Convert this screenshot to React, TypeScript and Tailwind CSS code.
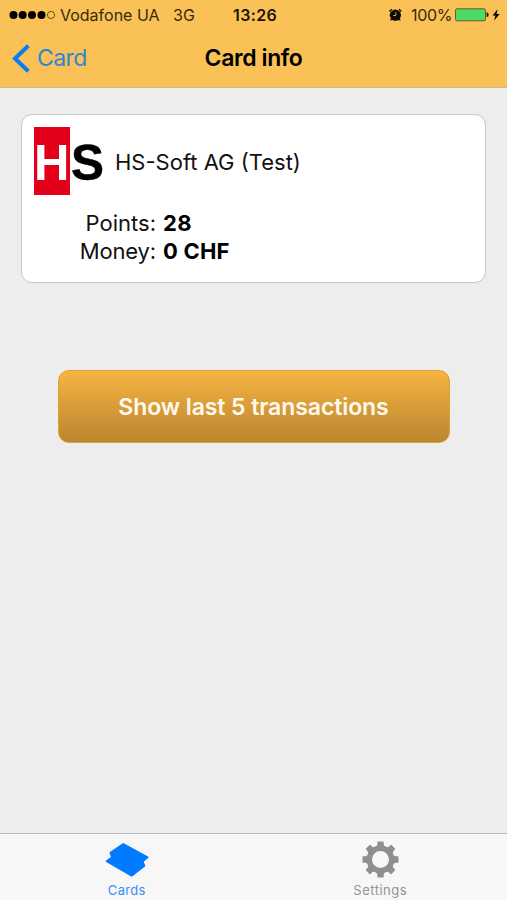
const StatusBar = () => {
  return (
    <div className="flex h-[30px] items-center text-[16px] leading-[30px] text-[#3a2a0c]">
      <svg className="ml-[9px] shrink-0" width="47" height="10" viewBox="0 0 47 10">
        <circle cx="4.5" cy="5" r="4" fill="#000" />
        <circle cx="13.7" cy="5" r="4" fill="#000" />
        <circle cx="23" cy="5" r="4" fill="#000" />
        <circle cx="32.5" cy="5" r="4" fill="#000" />
        <circle cx="42" cy="5" r="3.6" fill="none" stroke="#4a3610" strokeWidth="0.8" />
      </svg>
      <span className="ml-[4px] w-[113px] whitespace-nowrap">Vodafone UA</span>
      <span className="w-[60px]">3G</span>
      <span className="w-[155px] font-semibold tracking-[0.4px] text-[#1c1404]">13:26</span>
      <svg className="shrink-0" width="14" height="14" viewBox="0 0 14 14">
        <circle cx="7.4" cy="7.2" r="5.6" fill="#0d0a02" />
        <path d="M1.4 3.4 L3.8 1.2 M13.4 3.4 L11 1.2 M3.6 11 L2.6 12.4 M11.2 11 L12.2 12.4" stroke="#0d0a02" strokeWidth="1.3" />
        <path d="M7.8 4.4 V7.6 H5.2" fill="none" stroke="#f9c156" strokeWidth="0.9" />
      </svg>
      <span className="ml-[9px] w-[44px] whitespace-nowrap tracking-[-0.3px]">100%</span>
      <svg className="shrink-0" width="46" height="14" viewBox="0 0 46 14">
        <rect x="0.5" y="0.8" width="30" height="12" rx="1.6" fill="#4cd964" stroke="#6a5c20" />
        <path d="M31.5 4.5 h0.6 q1.4 0 1.4 1.4 v1.7 q0 1.4 -1.4 1.4 h-0.6z" fill="#2a1f06" />
        <path d="M42.6 1.2 L37.6 7.6 H40.4 L39.2 12.4 L44.6 6 H41.6z" fill="#000" />
      </svg>
    </div>
  );
};

const NavBar = () => {
  return (
    <div className="grid h-[57px] grid-cols-[160px_1fr_160px] items-center">
      <a href="#" className="flex h-[57px] items-center text-[23px] text-[#2e86d8]">
        <svg className="ml-[12px] shrink-0" width="19" height="29" viewBox="0 0 19 29">
          <path d="M16.3 1.7 L3 14.5 L16.3 27.3" fill="none" stroke="#067df7" strokeWidth="4" />
        </svg>
        <span className="ml-[6px] tracking-[-0.6px]">Card</span>
      </a>
      <h1 className="text-center text-[23px] font-semibold tracking-[-0.4px] text-black">Card info</h1>
    </div>
  );
};

const Logo = () => {
  return (
    <svg className="shrink-0" width="70" height="68" viewBox="0 0 70 68" fontFamily="'Liberation Sans', Arial, sans-serif" fontWeight="700" fontSize="50">
      <rect width="36" height="68" fill="#e2001a" />
      <text x="0.1" y="53" fill="#fff" textLength="35.4" lengthAdjust="spacingAndGlyphs">H</text>
      <text x="37" y="53" fill="#000" stroke="#000" strokeWidth="0.5" textLength="33" lengthAdjust="spacingAndGlyphs">S</text>
    </svg>
  );
};

const CardPanel = () => {
  return (
    <section className="mx-[21px] h-[169px] rounded-[11px] border border-[#c8c8c8] bg-white pt-[12px]">
      <div className="flex items-center pl-[12px]">
        <Logo />
        <span className="ml-[11px] pt-[2px] text-[22px] text-[#111]">HS-Soft AG (Test)</span>
      </div>
      <dl className="mt-[14px] grid grid-cols-[134px_1fr] gap-x-[7px] text-[22px] leading-[28px] text-[#111]">
        <dt className="text-right">Points:</dt>
        <dd className="font-bold tracking-[0.4px] text-black">28</dd>
        <dt className="text-right tracking-[-0.15px]">Money:</dt>
        <dd className="font-bold tracking-[0.2px] text-black">0 CHF</dd>
      </dl>
    </section>
  );
};

const GearIcon = () => {
  const angles = [0, 45, 90, 135, 180, 225, 270, 315];
  return (
    <svg width="38" height="38" viewBox="-19.5 -18.5 38 38">
      <circle r="11.2" fill="none" stroke="#8f8f8f" strokeWidth="5.4" />
      {angles.map((a) => (
        <path key={a} d="M-5 -12.6 Q-3.4 -13.4 -3.2 -15 V-17.2 Q-3.2 -18 -2.4 -18 H2.4 Q3.2 -18 3.2 -17.2 V-15 Q3.4 -13.4 5 -12.6z" fill="#8f8f8f" transform={`rotate(${a})`} />
      ))}
    </svg>
  );
};

const CardsIcon = () => {
  return (
    <svg width="44" height="38" viewBox="105 841 44 38">
      <path
        d="M123.3 844 L147.6 857.4 L142.6 861.5 L144.4 865.9 L131.7 875.7 L106.6 861.2 L112 857.2 L110.4 852.7z"
        fill="#007aff"
        stroke="#007aff"
        strokeWidth="1.8"
        strokeLinejoin="round"
      />
    </svg>
  );
};

const TabBar = () => {
  return (
    <nav className="grid h-[67px] grid-cols-2 border-t border-[#b9b9b9] bg-[#f7f7f7] text-[13px] leading-[16px]">
      <a href="#" className="flex flex-col items-center pt-[7px] text-[#3b8ff5]">
        <CardsIcon />
        <span className="mt-[3px] tracking-[0.3px]">Cards</span>
      </a>
      <a href="#" className="flex flex-col items-center pt-[7px] text-[#949494]">
        <GearIcon />
        <span className="mt-[3px] tracking-[0.5px]">Settings</span>
      </a>
    </nav>
  );
};

export default function App() {
  return (
    <div className="flex h-[900px] w-[507px] flex-col overflow-hidden bg-[#ededed] font-['Inter','Liberation_Sans',sans-serif]">
      <header className="h-[88px] border-b border-[#c9b99a] bg-[#f9c156]">
        <StatusBar />
        <NavBar />
      </header>
      <main className="flex-1 pt-[26px]">
        <CardPanel />
        <button className="mx-auto mt-[87px] block h-[73px] w-[392px] rounded-[11px] border border-[#dda038] bg-linear-to-b from-[#f6b442] to-[#bb862f] pt-px text-[23px] font-semibold tracking-[-0.08px] text-[#fffaf0]">
          Show last 5 transactions
        </button>
      </main>
      <TabBar />
    </div>
  );
}
